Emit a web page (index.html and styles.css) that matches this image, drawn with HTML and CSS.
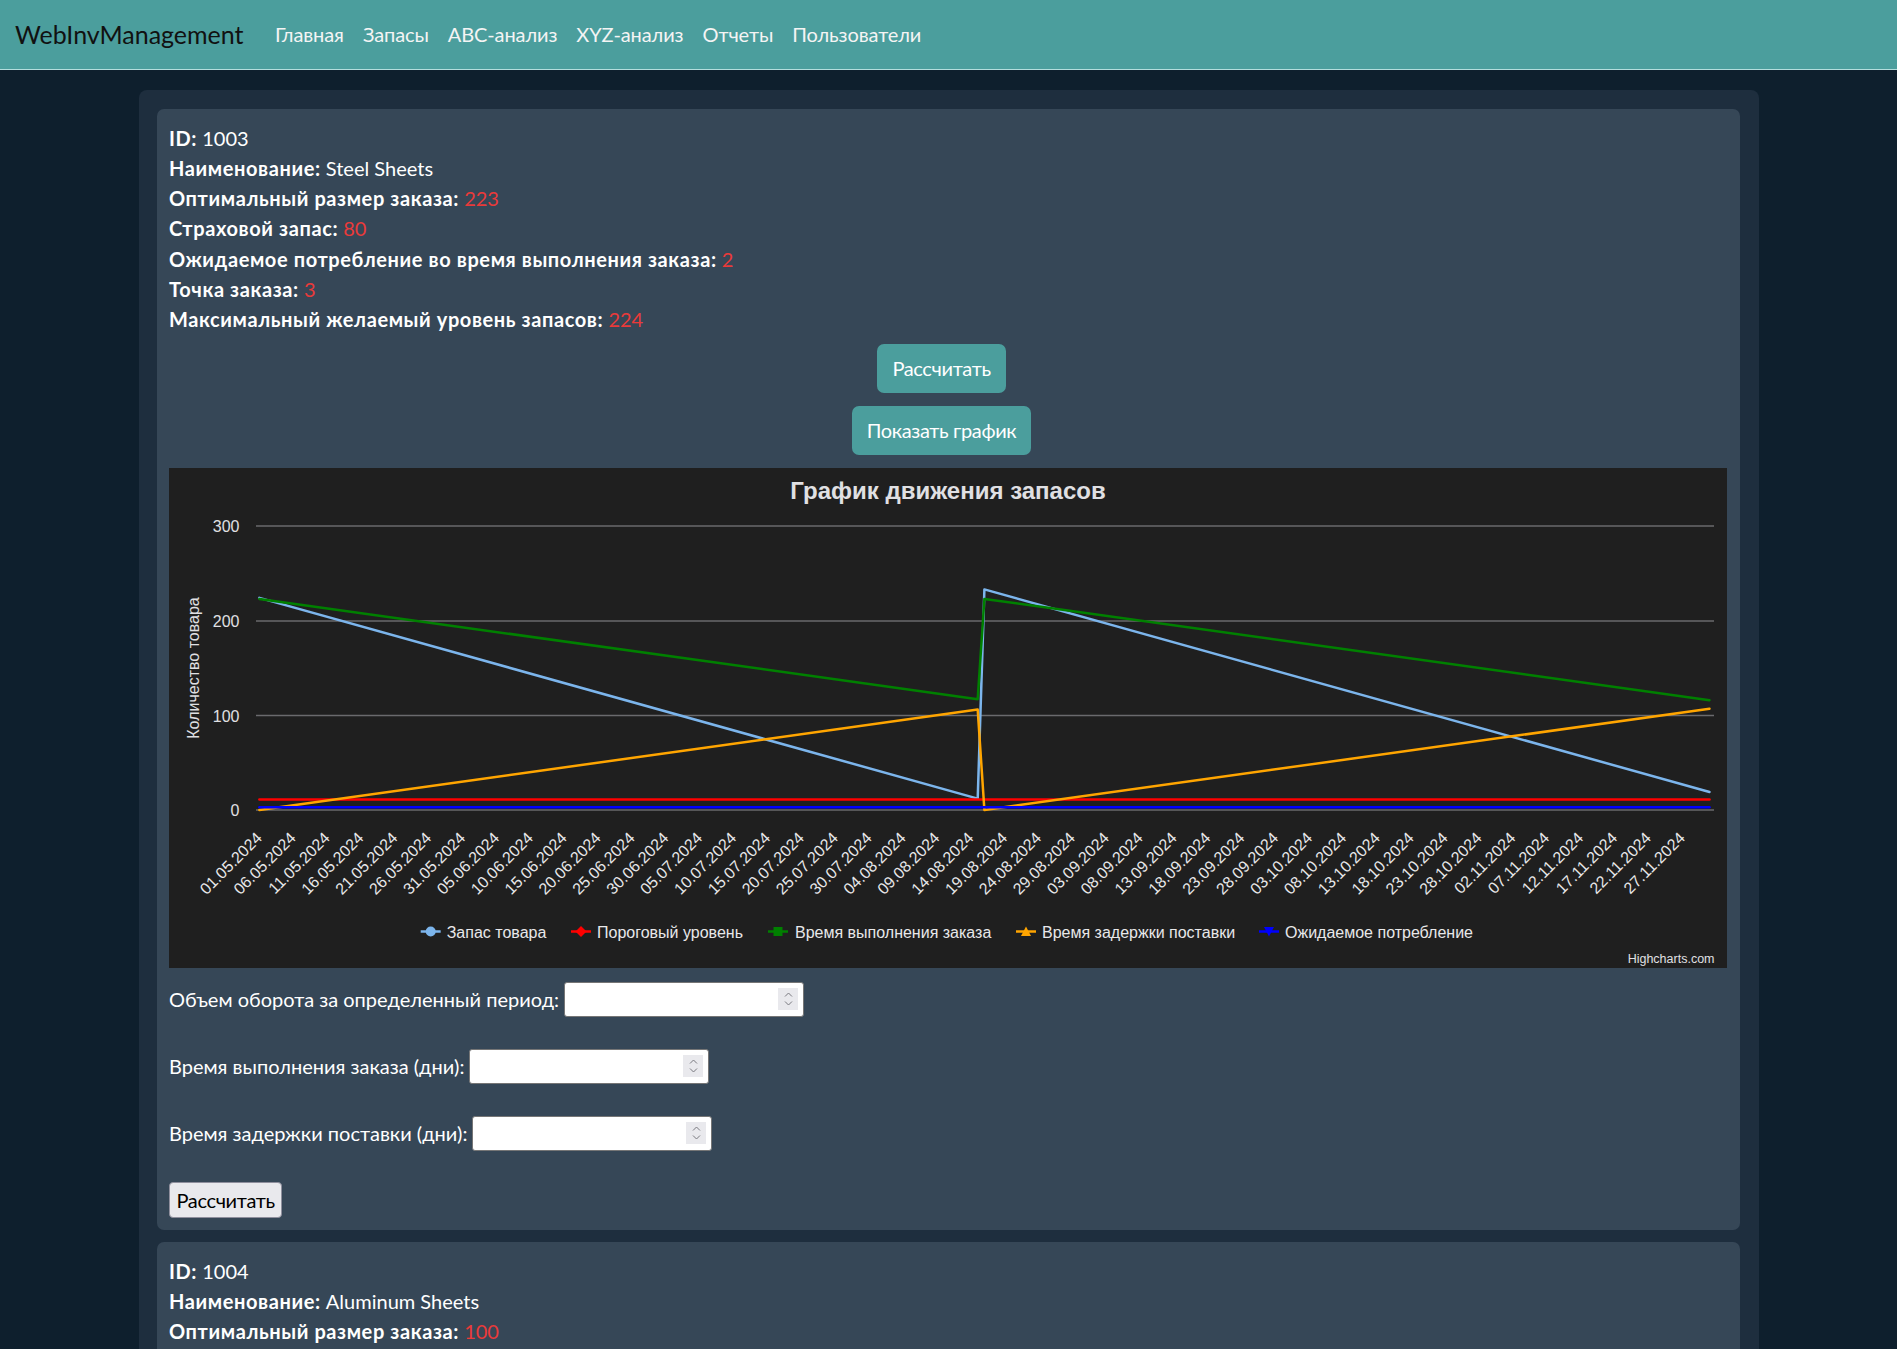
FILE: index.html
```html
<!DOCTYPE html>
<html lang="ru">
<head>
<meta charset="utf-8">
<title>WebInvManagement</title>
<link rel="stylesheet" href="styles.css">
</head>
<body>
<nav class="navbar">
  <a class="brand" href="#">WebInvManagement</a>
  <ul class="nav">
    <li><a href="#">Главная</a></li>
    <li><a href="#">Запасы</a></li>
    <li><a href="#">ABC-анализ</a></li>
    <li><a href="#">XYZ-анализ</a></li>
    <li><a href="#">Отчеты</a></li>
    <li><a href="#">Пользователи</a></li>
  </ul>
</nav>

<main class="outer">
  <section class="card">
    <div class="info">
      <p><b>ID:</b> 1003</p>
      <p><b>Наименование:</b> Steel Sheets</p>
      <p><b>Оптимальный размер заказа:</b> <span class="val">223</span></p>
      <p><b>Страховой запас:</b> <span class="val">80</span></p>
      <p><b>Ожидаемое потребление во время выполнения заказа:</b> <span class="val">2</span></p>
      <p><b>Точка заказа:</b> <span class="val">3</span></p>
      <p><b>Максимальный желаемый уровень запасов:</b> <span class="val">224</span></p>
    </div>
    <div class="actions">
      <button class="btn-teal">Рассчитать</button>
      <button class="btn-teal">Показать график</button>
    </div>
    <div class="chart">
      <svg class="chart-svg" width="1558" height="500" viewBox="0 0 1558 500">
        <text class="ch-title" x="779" y="31">График движения запасов</text>
        <g class="grid">
          <line x1="87" y1="58" x2="1545" y2="58"/>
          <line x1="87" y1="153" x2="1545" y2="153"/>
          <line x1="87" y1="247.5" x2="1545" y2="247.5"/>
          <line x1="87" y1="342" x2="1545" y2="342"/>
        </g>
        <g class="ylab">
          <text x="70.5" y="64">300</text>
          <text x="70.5" y="159">200</text>
          <text x="70.5" y="253.5">100</text>
          <text x="70.5" y="348">0</text>
        </g>
        <text class="ytitle" transform="translate(30 200) rotate(-90)">Количество товара</text>
        <g class="series">
          <polyline stroke="#7cb5ec" points="90.4,129.9 808.7,330.6 815.4,121.4 1540.5,324"/>
          <polyline stroke="#ff0000" points="90.4,331.6 1540.5,331.6"/>
          <polyline stroke="#008000" points="90.4,130.9 808.7,231.2 815.4,130.9 1540.5,232.2"/>
          <polyline stroke="#ffa500" points="90.4,342 808.7,241.6 815.4,342 1540.5,240.7"/>
          <polyline stroke="#0000ff" points="90.4,339.2 1540.5,339.2"/>
        </g>
        <g class="xlab">
          <text transform="translate(94 371) rotate(-45)">01.05.2024</text>
          <text transform="translate(127.9 371) rotate(-45)">06.05.2024</text>
          <text transform="translate(161.8 371) rotate(-45)">11.05.2024</text>
          <text transform="translate(195.6 371) rotate(-45)">16.05.2024</text>
          <text transform="translate(229.5 371) rotate(-45)">21.05.2024</text>
          <text transform="translate(263.4 371) rotate(-45)">26.05.2024</text>
          <text transform="translate(297.3 371) rotate(-45)">31.05.2024</text>
          <text transform="translate(331.2 371) rotate(-45)">05.06.2024</text>
          <text transform="translate(365 371) rotate(-45)">10.06.2024</text>
          <text transform="translate(398.9 371) rotate(-45)">15.06.2024</text>
          <text transform="translate(432.8 371) rotate(-45)">20.06.2024</text>
          <text transform="translate(466.7 371) rotate(-45)">25.06.2024</text>
          <text transform="translate(500.6 371) rotate(-45)">30.06.2024</text>
          <text transform="translate(534.4 371) rotate(-45)">05.07.2024</text>
          <text transform="translate(568.3 371) rotate(-45)">10.07.2024</text>
          <text transform="translate(602.2 371) rotate(-45)">15.07.2024</text>
          <text transform="translate(636.1 371) rotate(-45)">20.07.2024</text>
          <text transform="translate(670 371) rotate(-45)">25.07.2024</text>
          <text transform="translate(703.8 371) rotate(-45)">30.07.2024</text>
          <text transform="translate(737.7 371) rotate(-45)">04.08.2024</text>
          <text transform="translate(771.6 371) rotate(-45)">09.08.2024</text>
          <text transform="translate(805.5 371) rotate(-45)">14.08.2024</text>
          <text transform="translate(839.4 371) rotate(-45)">19.08.2024</text>
          <text transform="translate(873.2 371) rotate(-45)">24.08.2024</text>
          <text transform="translate(907.1 371) rotate(-45)">29.08.2024</text>
          <text transform="translate(941 371) rotate(-45)">03.09.2024</text>
          <text transform="translate(974.9 371) rotate(-45)">08.09.2024</text>
          <text transform="translate(1008.8 371) rotate(-45)">13.09.2024</text>
          <text transform="translate(1042.6 371) rotate(-45)">18.09.2024</text>
          <text transform="translate(1076.5 371) rotate(-45)">23.09.2024</text>
          <text transform="translate(1110.4 371) rotate(-45)">28.09.2024</text>
          <text transform="translate(1144.3 371) rotate(-45)">03.10.2024</text>
          <text transform="translate(1178.2 371) rotate(-45)">08.10.2024</text>
          <text transform="translate(1212 371) rotate(-45)">13.10.2024</text>
          <text transform="translate(1245.9 371) rotate(-45)">18.10.2024</text>
          <text transform="translate(1279.8 371) rotate(-45)">23.10.2024</text>
          <text transform="translate(1313.7 371) rotate(-45)">28.10.2024</text>
          <text transform="translate(1347.6 371) rotate(-45)">02.11.2024</text>
          <text transform="translate(1381.4 371) rotate(-45)">07.11.2024</text>
          <text transform="translate(1415.3 371) rotate(-45)">12.11.2024</text>
          <text transform="translate(1449.2 371) rotate(-45)">17.11.2024</text>
          <text transform="translate(1483.1 371) rotate(-45)">22.11.2024</text>
          <text transform="translate(1517 371) rotate(-45)">27.11.2024</text>
        </g>
        <g class="legend">
          <line class="lg-line" stroke="#7cb5ec" x1="251.7" y1="463.5" x2="271.7" y2="463.5"/>
          <circle cx="261.7" cy="463.5" r="5" fill="#7cb5ec"/>
          <text x="277.7" y="469.5">Запас товара</text>
          <line class="lg-line" stroke="#ff0000" x1="402" y1="463.5" x2="422" y2="463.5"/>
          <polygon points="412,458 417.5,463.5 412,469 406.5,463.5" fill="#ff0000"/>
          <text x="428" y="469.5">Пороговый уровень</text>
          <line class="lg-line" stroke="#008000" x1="599" y1="463.5" x2="619" y2="463.5"/>
          <rect x="604.5" y="459" width="9" height="9" fill="#008000"/>
          <text x="626" y="469.5">Время выполнения заказа</text>
          <line class="lg-line" stroke="#ffa500" x1="847" y1="463.5" x2="867" y2="463.5"/>
          <polygon points="857,458.5 862,468 852,468" fill="#ffa500"/>
          <text x="873" y="469.5">Время задержки поставки</text>
          <line class="lg-line" stroke="#0000ff" x1="1090" y1="463.5" x2="1110" y2="463.5"/>
          <polygon points="1095,459 1105,459 1100,468.5" fill="#0000ff"/>
          <text x="1116" y="469.5">Ожидаемое потребление</text>
        </g>
        <text class="credits" x="1545.5" y="495">Highcharts.com</text>
      </svg>
    </div>
    <form class="calc-form">
      <div class="row"><label>Объем оборота за определенный период:</label> <span class="num"><input type="number"><span class="spin"><svg width="9" height="16" viewBox="0 0 9 16"><path d="M1 5.5 L4.5 2 L8 5.5 M1 10.5 L4.5 14 L8 10.5"/></svg></span></span></div>
      <div class="row"><label>Время выполнения заказа (дни):</label> <span class="num"><input type="number"><span class="spin"><svg width="9" height="16" viewBox="0 0 9 16"><path d="M1 5.5 L4.5 2 L8 5.5 M1 10.5 L4.5 14 L8 10.5"/></svg></span></span></div>
      <div class="row"><label>Время задержки поставки (дни):</label> <span class="num"><input type="number"><span class="spin"><svg width="9" height="16" viewBox="0 0 9 16"><path d="M1 5.5 L4.5 2 L8 5.5 M1 10.5 L4.5 14 L8 10.5"/></svg></span></span></div>
      <div class="row"><button type="button" class="btn-plain">Рассчитать</button></div>
    </form>
  </section>

  <section class="card">
    <div class="info">
      <p><b>ID:</b> 1004</p>
      <p><b>Наименование:</b> Aluminum Sheets</p>
      <p><b>Оптимальный размер заказа:</b> <span class="val">100</span></p>
    </div>
  </section>
</main>
</body>
</html>
```

FILE: styles.css
```css
* { box-sizing: border-box; }
html, body { margin: 0; padding: 0; }
body {
  background: #0e1f2d;
  font-family: Lato, "Open Sans", sans-serif;
  font-size: 20px;
  color: #fff;
}
.navbar {
  display: flex;
  align-items: center;
  height: 70px;
  padding: 0 15px 1px;
  background: #4b9e9d;
  border-bottom: 1px solid #b4dedd;
}
.brand {
  font-size: 25px;
  color: #111;
  text-decoration: none;
  margin-right: 22px;
}
.nav {
  display: flex;
  list-style: none;
  margin: 0; padding: 0;
}
.nav a {
  display: block;
  padding: 0 9.5px;
  letter-spacing: -0.1px;
  color: #f4f4f4;
  text-decoration: none;
}
.outer {
  width: 1620px;
  margin: 20px auto 0;
  padding: 19px 19px 1px 18px;
  background: #1e2e3e;
  border-radius: 8px;
}
.card {
  background: #364757;
  border-radius: 7px;
  padding: 13.5px 12.5px 12.5px;
  margin-bottom: 12px;
}
.info p { margin: 0; line-height: 30.25px; }
.info b { font-weight: 700; letter-spacing: 0.6px; }
.val { color: #ea3a3a; }
.actions {
  display: flex;
  flex-direction: column;
  align-items: center;
  gap: 13px;
  margin-top: 9.5px;
  padding-right: 13px;
}
.btn-teal {
  font: inherit;
  line-height: 30px;
  letter-spacing: -0.35px;
  height: 49px;
  padding: 0 15px;
  border: 0;
  border-radius: 7px;
  background: #4b9e9d;
  color: #fff;
}
.chart {
  margin-top: 13px;
  background: #1f1f1f;
  height: 500px;
}
.chart-svg { display: block; font-family: "Liberation Sans", Arial, sans-serif; }
.ch-title { font-size: 24px; font-weight: 700; fill: #e0e0e3; text-anchor: middle; }
.grid line { stroke: #6a6a6d; stroke-width: 1.3; }
.ylab text { font-size: 16px; fill: #e0e0e3; text-anchor: end; }
.ytitle { font-size: 16px; fill: #e0e0e3; text-anchor: middle; }
.series polyline { fill: none; stroke-width: 2.5; stroke-linejoin: round; stroke-linecap: round; }
.xlab text { font-size: 16px; fill: #e8e8ea; text-anchor: end; }
.legend text { font-size: 16px; fill: #e8e8ea; }
.lg-line { stroke-width: 2.5; }
.credits { font-size: 12.5px; fill: #e0e0e3; text-anchor: end; }
.calc-form {
  display: flex;
  flex-direction: column;
  align-items: flex-start;
  gap: 32px;
  margin-top: 14px;
}
.row { display: flex; align-items: center; gap: 5px; height: 35px; }
.num {
  display: flex;
  align-items: center;
  width: 240px;
  height: 35px;
  border: 1px solid #767676;
  border-radius: 3px;
  background: #fff;
  padding-right: 5px;
}
.num input {
  flex: 1;
  min-width: 0;
  height: 100%;
  border: 0;
  outline: none;
  background: transparent;
  font: inherit;
  padding: 0 4px;
  -moz-appearance: textfield;
}
.num input::-webkit-inner-spin-button,
.num input::-webkit-outer-spin-button { -webkit-appearance: none; margin: 0; }
.spin {
  display: flex;
  align-items: center;
  justify-content: center;
  width: 20px;
  height: 22px;
  background: #e9e9ed;
}
.spin path { fill: none; stroke: #7a7a80; stroke-width: 1; }
.btn-plain {
  font: inherit;
  line-height: 30px;
  letter-spacing: -0.35px;
  height: 36px;
  color: #000;
  padding: 0 6.5px;
  background: #e9e9ed;
  border: 1px solid #8f8f9d;
  border-radius: 4px;
}
```
